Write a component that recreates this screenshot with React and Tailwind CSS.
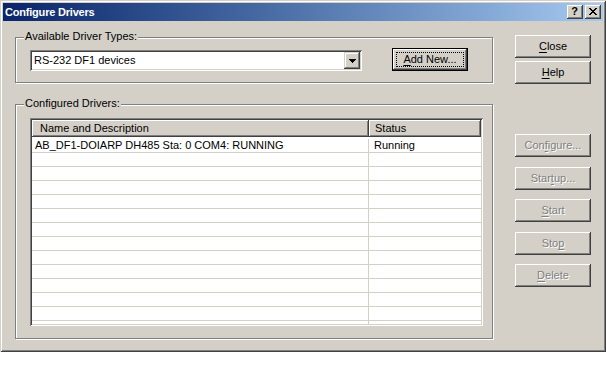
import React from "react";

const btn =
  "w-[76px] h-[23px] bg-[#d4d0c8] shadow-[inset_-1px_-1px_#404040,inset_1px_1px_#ffffff,inset_-2px_-2px_#808080] flex items-center justify-center text-[11px] text-black";
const disabled = "text-[#808080] [text-shadow:1px_1px_0_#ffffff]";

function U({ children }) {
  return <span className="underline underline-offset-[2px] decoration-[1px]">{children}</span>;
}

function Group({ label, className, children }) {
  return (
    <div
      className={
        "relative w-[478px] border border-[#808080] shadow-[inset_1px_1px_#ffffff,1px_1px_#ffffff] " +
        className
      }
    >
      <span className="absolute left-[8px] -top-[8px] px-[1px] bg-[#d4d0c8] text-[11px] leading-[13px] text-black">
        {label}
      </span>
      {children}
    </div>
  );
}

export default function App() {
  const rows = Array.from({ length: 14 });
  return (
    <div className="w-[606px] h-[384px] bg-white font-['Liberation_Sans',Arial,sans-serif]">
      <div className="w-[606px] h-[352px] bg-[#d4d0c8] p-[3px] flex flex-col shadow-[inset_1px_1px_#d4d0c8,inset_-1px_-1px_#404040,inset_2px_2px_#ffffff,inset_-2px_-2px_#808080]">
        {/* Title bar */}
        <div className="h-[18px] flex items-center bg-linear-to-r from-[#0a246a] to-[#a6caf0] pl-[2px] pr-[2px]">
          <span className="text-white font-bold text-[11px] tracking-[-0.2px] leading-none">
            Configure Drivers
          </span>
          <div className="ml-auto flex gap-[2px]">
            <div className="w-[16px] h-[14px] bg-[#d4d0c8] shadow-[inset_-1px_-1px_#404040,inset_1px_1px_#ffffff,inset_-2px_-2px_#808080] flex items-center justify-center">
              <span className="text-[11px] font-bold leading-none text-black -mt-[1px] -ml-[1px]">?</span>
            </div>
            <div className="w-[16px] h-[14px] bg-[#d4d0c8] shadow-[inset_-1px_-1px_#404040,inset_1px_1px_#ffffff,inset_-2px_-2px_#808080] flex items-center justify-center">
              <svg width="8" height="7" viewBox="0 0 8 7" shapeRendering="crispEdges" className="-mt-[1px] -ml-[1px]">
                <path
                  d="M0 0h2v1H0zM6 0h2v1H6zM1 1h2v1H1zM5 1h2v1H5zM2 2h4v1H2zM3 3h2v1H3zM2 4h4v1H2zM1 5h2v1H1zM5 5h2v1H5zM0 6h2v1H0zM6 6h2v1H6z"
                  fill="#000"
                />
              </svg>
            </div>
          </div>
        </div>

        {/* Content */}
        <div className="flex flex-1 pl-[12px]">
          <div className="flex flex-col pt-[16px]">
            <Group label="Available Driver Types:" className="h-[46px] pt-[10px] pl-[14px]">
              <div className="flex items-end">
                <div className="w-[332px] h-[21px] bg-white flex items-center shadow-[inset_1px_1px_#808080,inset_-1px_-1px_#ffffff,inset_2px_2px_#404040,inset_-2px_-2px_#d4d0c8] p-[2px]">
                  <span className="flex-1 pl-[2px] text-[11px] text-black">RS-232 DF1 devices</span>
                  <div className="w-[16px] h-[17px] bg-[#d4d0c8] shadow-[inset_-1px_-1px_#404040,inset_1px_1px_#d4d0c8,inset_-2px_-2px_#808080,inset_2px_2px_#ffffff] flex items-center justify-center">
                    <svg width="7" height="4" viewBox="0 0 7 4" shapeRendering="crispEdges">
                      <path d="M0 0h7v1H0zM1 1h5v1H1zM2 2h3v1H2zM3 3h1v1H3z" fill="#000" />
                    </svg>
                  </div>
                </div>
                <div className="ml-[30px] w-[76px] h-[23px] bg-[#d4d0c8] shadow-[inset_0_0_0_1px_#000000,inset_-2px_-2px_#404040,inset_2px_2px_#ffffff,inset_-3px_-3px_#808080] p-[4px] flex">
                  <div className="flex-1 border border-dotted border-black flex items-center justify-center text-[11px] text-black">
                    <span>
                      <U>A</U>dd New...
                    </span>
                  </div>
                </div>
              </div>
            </Group>

            <Group label="Configured Drivers:" className="mt-[21px] h-[235px] pt-[13px] pl-[14px]">
              <div className="w-[453px] h-[208px] bg-white p-[2px] shadow-[inset_1px_1px_#808080,inset_-1px_-1px_#ffffff,inset_2px_2px_#404040,inset_-2px_-2px_#d4d0c8]">
                <div className="w-full h-full overflow-hidden flex flex-col">
                  <div className="flex h-[17px] shrink-0 text-[11px] text-black">
                    <div className="w-[337px] h-full bg-[#d4d0c8] shadow-[inset_-1px_-1px_#404040,inset_1px_1px_#ffffff,inset_-2px_-2px_#808080] pl-[8px] flex items-center">
                      Name and Description
                    </div>
                    <div className="flex-1 h-full bg-[#d4d0c8] shadow-[inset_-1px_-1px_#404040,inset_1px_1px_#ffffff,inset_-2px_-2px_#808080] pl-[6px] flex items-center">
                      Status
                    </div>
                  </div>
                  <div className="h-[2px] shrink-0" />
                  {rows.map((_, i) => (
                    <div key={i} className="flex h-[14px] shrink-0 border-b border-[#d4d0c8] text-[11px] text-black leading-[13px]">
                      <div className="w-[337px] border-r border-[#d4d0c8] pl-[3px]">
                        {i === 0 ? "AB_DF1-DOIARP DH485 Sta: 0 COM4: RUNNING" : ""}
                      </div>
                      <div className="flex-1 pl-[5px]">{i === 0 ? "Running" : ""}</div>
                    </div>
                  ))}
                </div>
              </div>
            </Group>
          </div>

          <div className="ml-[22px] flex flex-col pt-[14px]">
            <div className={btn}>
              <span>
                <U>C</U>lose
              </span>
            </div>
            <div className={btn + " mt-[3px]"}>
              <span>
                <U>H</U>elp
              </span>
            </div>
            <div className={btn + " mt-[50px]"}>
              <span className={disabled}>
                Con<U>f</U>igure...
              </span>
            </div>
            <div className={btn + " mt-[10px]"}>
              <span className={disabled}>
                Star<U>t</U>up...
              </span>
            </div>
            <div className={btn + " mt-[9px]"}>
              <span className={disabled}>
                <U>S</U>tart
              </span>
            </div>
            <div className={btn + " mt-[10px]"}>
              <span className={disabled}>
                Sto<U>p</U>
              </span>
            </div>
            <div className={btn + " mt-[9px]"}>
              <span className={disabled}>
                <U>D</U>elete
              </span>
            </div>
          </div>
        </div>
      </div>
    </div>
  );
}
